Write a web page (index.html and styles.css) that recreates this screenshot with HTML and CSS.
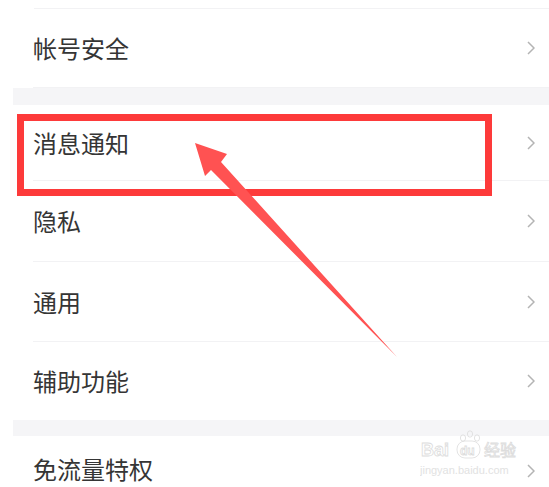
FILE: index.html
```html
<!DOCTYPE html>
<html lang="zh-CN">
<head>
    <meta charset="UTF-8">
    <title>设置</title>
    <link rel="stylesheet" href="styles.css">
</head>
<body>
    <div class="screen">
        <ul class="group">
            <li class="stub"></li>
            <li class="row r-account"><span>帐号安全</span><svg class="chev" viewBox="0 0 8 14"><polyline points="1,1 7,7 1,13"/></svg></li>
        </ul>
        <div class="gap"></div>
        <ul class="group">
            <li class="row r-notice"><span>消息通知</span><svg class="chev" viewBox="0 0 8 14"><polyline points="1,1 7,7 1,13"/></svg></li>
            <li class="row r-privacy"><span>隐私</span><svg class="chev" viewBox="0 0 8 14"><polyline points="1,1 7,7 1,13"/></svg></li>
            <li class="row r-general"><span>通用</span><svg class="chev" viewBox="0 0 8 14"><polyline points="1,1 7,7 1,13"/></svg></li>
            <li class="row r-assist last"><span>辅助功能</span><svg class="chev" viewBox="0 0 8 14"><polyline points="1,1 7,7 1,13"/></svg></li>
        </ul>
        <div class="gap gap2"></div>
        <ul class="group">
            <li class="row r-free last"><span>免流量特权</span><svg class="chev" viewBox="0 0 8 14"><polyline points="1,1 7,7 1,13"/></svg></li>
        </ul>

        <!-- 标注 -->
        <div class="mark-box"></div>
        <svg class="arrow" viewBox="0 0 549 487">
            <polygon points="195,143 227,154 221,162 397,357 211,170 205,176"/>
        </svg>

        <!-- 水印 -->
        <svg class="wm" viewBox="0 0 110 52">
            <g class="paw">
                <ellipse cx="43" cy="10" rx="2.6" ry="3.2"/>
                <ellipse cx="50" cy="6" rx="2.6" ry="3.2"/>
                <ellipse cx="57" cy="10" rx="2.6" ry="3.2"/>
                <rect x="37" y="13" width="23" height="17" rx="8"/>
            </g>
            <text class="big" x="1" y="28">Bai</text>
            <text class="du" x="40" y="27">du</text>
            <text class="cn" x="64" y="28">经验</text>
            <text class="small" x="0" y="46">jingyan.baidu.com</text>
        </svg>
    </div>
</body>
</html>
```

FILE: styles.css
```css
html,body{
    margin:0;
    padding:0;
    background:#fff;
}
body{
    font-family:"Noto Sans CJK SC","Noto Sans",sans-serif;
    color:#353535;
}
.screen{
    position:relative;
    width:549px;
    height:487px;
    overflow:hidden;
}
.group{
    list-style:none;
    margin:0;
    padding:0;
}
.stub{
    height:9px;
    margin-left:34px;
    border-bottom:1px solid #f2f2f4;
    box-sizing:border-box;
}
.row{
    display:flex;
    align-items:center;
    justify-content:space-between;
    margin-left:33px;
    padding-right:14px;
    border-bottom:1px solid #f2f2f4;
    font-size:24px;
    line-height:1;
    box-sizing:border-box;
}
.row.last{
    border-bottom:none;
}
.r-account{height:79px;}
.r-notice{height:76px;}
.r-privacy{height:81px;}
.r-general{height:80px;}
.r-assist{height:78px;}
/* 最后一行只露出上半部分 */
.r-free{
    height:51px;
    align-items:flex-start;
    padding-top:21px;
}
.r-free .chev{
    margin-top:7px;
}
.gap{
    margin-left:13px;
    height:17px;
    background:#f5f5f7;
}
.gap2{
    height:16px;
}
.chev{
    width:8px;
    height:14px;
    fill:none;
    stroke:#b4b4b4;
    stroke-width:1.5;
}
.mark-box{
    position:absolute;
    left:17px;
    top:114px;
    width:475px;
    height:82px;
    border:7px solid #fd3a3a;
    box-sizing:border-box;
}
.arrow{
    position:absolute;
    left:0;
    top:0;
    width:549px;
    height:487px;
}
.arrow polygon{
    fill:#ff5252;
}
.wm{
    position:absolute;
    left:420px;
    top:428px;
    width:110px;
    height:52px;
}
.wm text,.wm .paw{
    fill:none;
    stroke:#dcdcdc;
    stroke-width:0.8;
    font-family:"Liberation Sans",sans-serif;
}
.wm .big{
    font-size:18px;
    font-weight:bold;
}
.wm .du{
    font-size:12px;
    font-weight:bold;
}
.wm .cn{
    font-size:16px;
    font-family:"Noto Sans CJK SC",sans-serif;
}
.wm .small{
    font-size:11px;
    fill:#e2e2e2;
    stroke:none;
}
```
